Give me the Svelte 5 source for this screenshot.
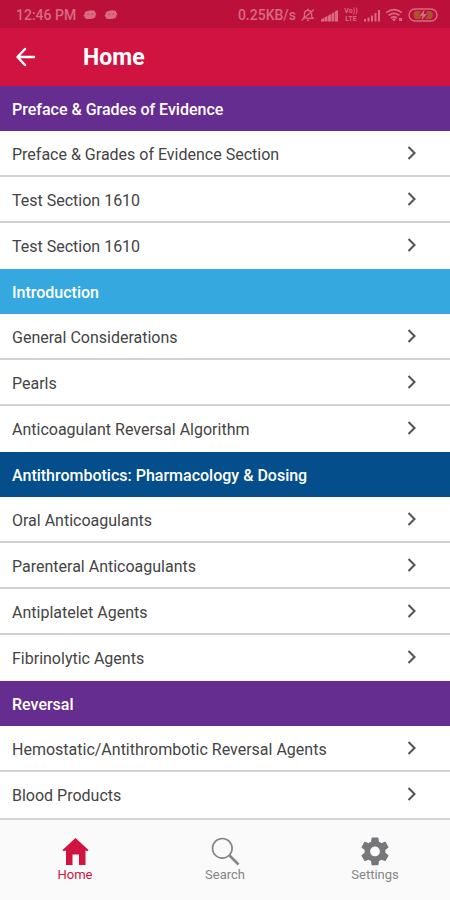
<script>
  const sections = [
    { title: 'Preface & Grades of Evidence', tone: 'purple', items: ['Preface & Grades of Evidence Section', 'Test Section 1610', 'Test Section 1610'] },
    { title: 'Introduction', tone: 'sky', items: ['General Considerations', 'Pearls', 'Anticoagulant Reversal Algorithm'] },
    { title: 'Antithrombotics: Pharmacology & Dosing', tone: 'navy', items: ['Oral Anticoagulants', 'Parenteral Anticoagulants', 'Antiplatelet Agents', 'Fibrinolytic Agents'] },
    { title: 'Reversal', tone: 'purple', items: ['Hemostatic/Antithrombotic Reversal Agents', 'Blood Products'] }
  ];
</script>

{#snippet robot()}
  <svg width="14" height="12" viewBox="0 0 14 12" aria-hidden="true">
    <path d="M4 2.2 Q8 .2 12 2 L12.5 4.2 L13.5 5 L12.6 6.2 L12 8.8 Q7 11 2 9.4 L1.6 7.6 L.4 7 L1.4 5.4 L2 3Z" fill="currentColor" />
    <path d="M4.5 5.3 L6 5 M8.5 5.2 L10 4.8" stroke="#bb1039" stroke-width=".6" />
  </svg>
{/snippet}

<div class="app">
  <div class="status">
    <div class="group">
      <span class="time">12:46 PM</span>
      {@render robot()}
      {@render robot()}
    </div>
    <div class="group right">
      <span class="speed">0.25KB/s</span>
      <svg width="16" height="14" viewBox="0 0 16 14" fill="none" stroke="currentColor" stroke-width="1.3" aria-hidden="true">
        <path d="M3.2 10 L4.4 8.6 V5.5 Q4.6 2.8 8 2.2 Q11.4 2.8 11.6 5.5 V8.6 L13 10.3 H5.5 M6.8 12.4 H9.2 M1.5 12.5 L14 1.5 M8 .6 V2" />
      </svg>
      <svg width="19" height="13" viewBox="0 0 19 13" fill="currentColor" aria-hidden="true">
        <path d="M1 12.5 V10.5 L4 9 V12.5Z M4.4 12.5 V8.6 L7.5 7 V12.5Z M8 12.5 V6.7 L11 5 V12.5Z M11.5 12.5 V4.7 L14.3 3 V12.5Z M14.9 12.5 V2.6 L18 1 V12.5Z" />
      </svg>
      <span class="lte"><span>Vo))</span><span>LTE</span></span>
      <svg width="18" height="13" viewBox="0 0 18 13" fill="currentColor" aria-hidden="true">
        <path d="M1 10h2v2.5H1zM4.5 8.5h2v4h-2zM8 6.5h2v6H8zM11.5 4h2v8.5h-2zM15 1h2v11.5h-2z" />
      </svg>
      <svg class="wifi" width="19" height="14" viewBox="0 0 19 14" fill="none" stroke="currentColor" stroke-width="1.7" aria-hidden="true">
        <path d="M1.2 4.6 Q9 -1.4 16.8 4.6 M3.6 7.4 Q9 3.2 14.4 7.4 M6 10 Q9 7.8 12 10" />
        <path d="M9 10 L11 11.2 L9 13.5 L7 11.2Z M14 10 H17 V13 H14Z" fill="currentColor" stroke="none" />
      </svg>
      <svg width="30" height="14" viewBox="0 0 30 14" aria-hidden="true">
        <rect x="1" y="1" width="28" height="12" rx="6" fill="none" stroke="currentColor" stroke-width="1.4" />
        <path d="M7 3 H13 L11 7 H14 L12 11 H7Q4 7 7 3Z M19 3 H23 Q27 7 23 11 H17 L20 6 H18Z" fill="#a9532f" />
        <path d="M16.5 1.5 L11.5 7.8 H14.6 L13.3 12.5 L19 6 H15.8Z" fill="currentColor" />
      </svg>
    </div>
  </div>

  <header>
    <button class="back" aria-label="Back">
      <svg width="20" height="20" viewBox="0 0 20 20" fill="none" stroke="#fff" stroke-width="2.4" stroke-linecap="round" stroke-linejoin="round" aria-hidden="true">
        <path d="M18 10 H2 M9 2 L1.5 10 L9 18" />
      </svg>
    </button>
    <h1>Home</h1>
  </header>

  <main>
    {#each sections as section}
      <section>
        <h2 class={section.tone}>{section.title}</h2>
        <ul>
          {#each section.items as item}
            <li>
              <a href="#top">
                <span>{item}</span>
                <svg width="10" height="14" viewBox="0 0 10 14" fill="none" stroke="#555" stroke-width="2.1" aria-hidden="true">
                  <path d="M1.5 1 L7.5 7 L1.5 13" />
                </svg>
              </a>
            </li>
          {/each}
        </ul>
      </section>
    {/each}
  </main>

  <nav aria-label="Main">
    <a href="#home" class="active" aria-current="page">
      <svg width="30" height="30" viewBox="0 0 30 30" fill="currentColor" aria-hidden="true">
        <path d="M15.5 1 L28.5 13 L27.3 14.2 L25.5 13.5 V28 H19 V17.5 H12.5 V28 H6 V13.5 L3.7 14.2 L2.5 13Z" />
      </svg>
      <span>Home</span>
    </a>
    <a href="#search">
      <svg width="30" height="30" viewBox="0 0 30 30" fill="none" stroke="currentColor" aria-hidden="true">
        <circle cx="12.3" cy="11.3" r="9.8" stroke-width="1.7" />
        <path d="M19.5 18.5 L28.5 27.5" stroke-width="2.6" />
      </svg>
      <span>Search</span>
    </a>
    <a href="#settings">
      <svg width="30" height="30" viewBox="1.2 1.6 21.6 21.6" fill="#77777a" aria-hidden="true">
        <path d="M19.43 12.98c.04-.32.07-.64.07-.98s-.03-.66-.07-.98l2.11-1.65c.19-.15.24-.42.12-.64l-2-3.46c-.12-.22-.39-.3-.61-.22l-2.49 1c-.52-.4-1.08-.73-1.69-.98l-.38-2.65C14.46 2.18 14.25 2 14 2h-4c-.25 0-.46.18-.49.42l-.38 2.65c-.61.25-1.17.59-1.69.98l-2.49-1c-.23-.09-.49 0-.61.22l-2 3.46c-.13.22-.07.49.12.64l2.11 1.65c-.04.32-.07.65-.07.98s.03.66.07.98l-2.11 1.65c-.19.15-.24.42-.12.64l2 3.46c.12.22.39.3.61.22l2.49-1c.52.4 1.08.73 1.69.98l.38 2.65c.03.24.24.42.49.42h4c.25 0 .46-.18.49-.42l.38-2.65c.61-.25 1.17-.59 1.69-.98l2.49 1c.23.09.49 0 .61-.22l2-3.46c.12-.22.07-.49-.12-.64l-2.11-1.65zM12 15.5c-1.93 0-3.5-1.57-3.5-3.5s1.57-3.5 3.5-3.5 3.5 1.57 3.5 3.5-1.57 3.5-3.5 3.5z" />
      </svg>
      <span>Settings</span>
    </a>
  </nav>
</div>

<style>
  :global(body) {
    margin: 0;
    background: #fafafa;
  }
  .app {
    display: flex;
    flex-direction: column;
    min-height: 100vh;
    background: #fafafa;
    font-family: Roboto, 'Liberation Sans', sans-serif;
  }
  .status {
    display: flex;
    justify-content: space-between;
    align-items: center;
    box-sizing: border-box;
    height: 28px;
    padding: 2px 12px 0 16px;
    background: #bb1039;
    color: #d96a84;
    font-size: 14px;
    font-weight: 500;
  }
  .group {
    display: flex;
    align-items: center;
    gap: 7px;
  }
  .right {
    gap: 4px;
  }
  .lte {
    display: flex;
    flex-direction: column;
    align-items: center;
    width: 16px;
    font-size: 7px;
    font-weight: 700;
    line-height: 8px;
  }
  header {
    display: flex;
    align-items: center;
    height: 58px;
    padding: 0 16px;
    background: #d01341;
    color: #fff;
  }
  .back {
    display: flex;
    width: 67px;
    padding: 0;
    border: 0;
    background: none;
  }
  h1 {
    margin: 0;
    padding-top: 2px;
    font-size: 23px;
    line-height: 28px;
    font-weight: 700;
  }
  h2 {
    margin: 0;
    padding: 2px 12px 0;
    color: #fff;
    font-size: 16px;
    font-weight: 500;
    line-height: 43px;
  }
  .purple { background: #652d90; }
  .sky { background: #35a8e0; }
  .navy { background: #034e8b; }
  ul {
    margin: 0;
    padding: 0;
    list-style: none;
    background: #fff;
  }
  li a {
    display: flex;
    justify-content: space-between;
    align-items: center;
    box-sizing: border-box;
    height: 46px;
    padding: 0 33px 0 12px;
    border-bottom: 2px solid #d2d2d2;
    color: #444;
    font-size: 16px;
    text-decoration: none;
  }
  li span {
    padding-top: 3px;
  }
  li:last-child a {
    border-bottom-color: transparent;
  }
  nav {
    display: flex;
    flex: 1;
    align-items: center;
    border-top: 2px solid #d6d6d6;
  }
  nav a {
    display: flex;
    flex: 1;
    flex-direction: column;
    align-items: center;
    color: #858585;
    font-size: 13px;
    line-height: 16px;
    text-decoration: none;
  }
  nav a.active {
    color: #d01341;
  }
</style>
